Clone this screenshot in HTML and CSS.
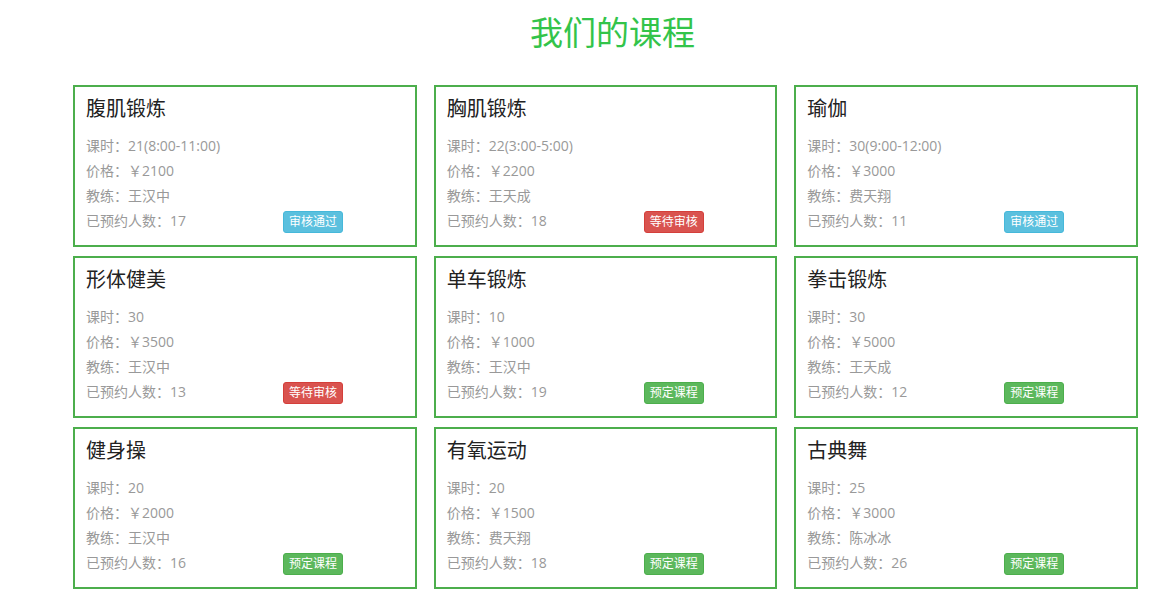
FILE: index.html
```html
<!DOCTYPE html>
<html lang="zh-CN">
<head>
    <meta charset="UTF-8">
    <meta name="viewport" content="width=device-width, initial-scale=1.0">
    <title>我们的课程</title>
    <link rel="stylesheet" href="styles.css">
</head>
<body>
    <div class="wrap">
        <h1 class="page-title">我们的课程</h1>

        <div class="course-list">
            <div class="course">
                <h3>腹肌锻炼</h3>
                <p>课时：21(8:00-11:00)</p>
                <p>价格：￥2100</p>
                <p>教练：王汉中</p>
                <p>已预约人数：17<span class="btn btn-info">审核通过</span></p>
            </div>
            <div class="course">
                <h3>胸肌锻炼</h3>
                <p>课时：22(3:00-5:00)</p>
                <p>价格：￥2200</p>
                <p>教练：王天成</p>
                <p>已预约人数：18<span class="btn btn-danger">等待审核</span></p>
            </div>
            <div class="course">
                <h3>瑜伽</h3>
                <p>课时：30(9:00-12:00)</p>
                <p>价格：￥3000</p>
                <p>教练：费天翔</p>
                <p>已预约人数：11<span class="btn btn-info">审核通过</span></p>
            </div>

            <div class="course">
                <h3>形体健美</h3>
                <p>课时：30</p>
                <p>价格：￥3500</p>
                <p>教练：王汉中</p>
                <p>已预约人数：13<span class="btn btn-danger">等待审核</span></p>
            </div>
            <div class="course">
                <h3>单车锻炼</h3>
                <p>课时：10</p>
                <p>价格：￥1000</p>
                <p>教练：王汉中</p>
                <p>已预约人数：19<span class="btn btn-success">预定课程</span></p>
            </div>
            <div class="course">
                <h3>拳击锻炼</h3>
                <p>课时：30</p>
                <p>价格：￥5000</p>
                <p>教练：王天成</p>
                <p>已预约人数：12<span class="btn btn-success">预定课程</span></p>
            </div>

            <div class="course">
                <h3>健身操</h3>
                <p>课时：20</p>
                <p>价格：￥2000</p>
                <p>教练：王汉中</p>
                <p>已预约人数：16<span class="btn btn-success">预定课程</span></p>
            </div>
            <div class="course">
                <h3>有氧运动</h3>
                <p>课时：20</p>
                <p>价格：￥1500</p>
                <p>教练：费天翔</p>
                <p>已预约人数：18<span class="btn btn-success">预定课程</span></p>
            </div>
            <div class="course">
                <h3>古典舞</h3>
                <p>课时：25</p>
                <p>价格：￥3000</p>
                <p>教练：陈冰冰</p>
                <p>已预约人数：26<span class="btn btn-success">预定课程</span></p>
            </div>
        </div>
    </div>
</body>
</html>
```

FILE: styles.css
```css
body {
    font-family: "Open Sans", "Noto Sans CJK SC", sans-serif;
    margin: 0;
    background-color: #fff;
    color: #333;
}
.wrap {
    width: 1065px;
    margin-left: 73px;
}
.page-title {
    margin: 0;
    padding: 13px 0 0 14px;
    height: 50px;
    box-sizing: border-box;
    text-align: center;
    font-size: 33px;
    font-weight: normal;
    line-height: 40px;
    color: #33c44a;
}
.course-list {
    display: grid;
    grid-template-columns: repeat(3, 1fr);
    column-gap: 17px;
    row-gap: 9px;
    margin-top: 35px;
}
.course {
    height: 162px;
    box-sizing: border-box;
    border: 2px solid #4cae4c;
    padding: 11px 11px 0 11px;
}
.course h3 {
    margin: 0 0 13px 0;
    font-size: 20px;
    font-weight: normal;
    line-height: 22px;
    color: #222;
}
.course p {
    margin: 0;
    font-size: 14px;
    line-height: 25px;
    color: #999;
}
.btn {
    display: inline-block;
    margin-left: 97px;
    padding: 1px 5px;
    font-size: 12px;
    line-height: 18px;
    color: #fff;
    border: 1px solid transparent;
    border-radius: 3px;
    vertical-align: middle;
}
.btn-info {
    background-color: #5bc0de;
    border-color: #46b8da;
}
.btn-danger {
    background-color: #d9534f;
    border-color: #d43f3a;
}
.btn-success {
    background-color: #5cb85c;
    border-color: #4cae4c;
}
```
